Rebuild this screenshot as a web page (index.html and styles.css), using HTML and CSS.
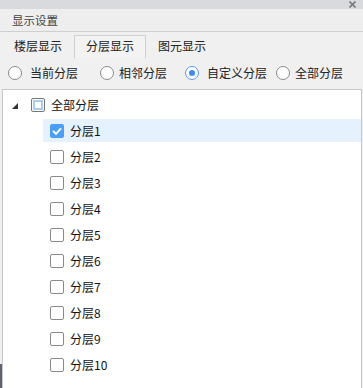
FILE: index.html
```html
<!DOCTYPE html>
<html>
<head>
<meta charset="utf-8">
<link rel="stylesheet" href="styles.css">
</head>
<body>
<div class="win">
  <div class="topbar"><svg class="close" width="7" height="7" viewBox="0 0 7 7"><path d="M0.5 0.5 L6.5 6.5 M6.5 0.5 L0.5 6.5" stroke="#7a7a7a" stroke-width="1.6"/></svg></div>
  <div class="title">显示设置</div>
  <div class="tabs">
    <div class="tab">楼层显示</div>
    <div class="tab active">分层显示</div>
    <div class="tab">图元显示</div>
  </div>
  <div class="radios">
    <label class="radio r1"><span class="dot"></span>当前分层</label>
    <label class="radio r2"><span class="dot"></span>相邻分层</label>
    <label class="radio r3 on"><span class="dot"></span>自定义分层</label>
    <label class="radio r4"><span class="dot"></span>全部分层</label>
  </div>
  <div class="tree">
    <div class="row root"><span class="arrow"></span><span class="cb part"></span><span class="lbl">全部分层</span></div>
    <div class="row child sel"><span class="cb checked"><svg width="10" height="8" viewBox="0 0 10 8"><path d="M1 4 L4 6.8 L9 1.3" fill="none" stroke="#fff" stroke-width="2"/></svg></span><span class="lbl">分层1</span></div>
    <div class="row child"><span class="cb"></span><span class="lbl">分层2</span></div>
    <div class="row child"><span class="cb"></span><span class="lbl">分层3</span></div>
    <div class="row child"><span class="cb"></span><span class="lbl">分层4</span></div>
    <div class="row child"><span class="cb"></span><span class="lbl">分层5</span></div>
    <div class="row child"><span class="cb"></span><span class="lbl">分层6</span></div>
    <div class="row child"><span class="cb"></span><span class="lbl">分层7</span></div>
    <div class="row child"><span class="cb"></span><span class="lbl">分层8</span></div>
    <div class="row child"><span class="cb"></span><span class="lbl">分层9</span></div>
    <div class="row child"><span class="cb"></span><span class="lbl">分层10</span></div>
  </div>
  <div class="edge"></div>
</div>
</body>
</html>
```
FILE: styles.css
```css
html, body {
  margin: 0;
  padding: 0;
  background: #f0f0f0;
}
body {
  font-family: "Microsoft YaHei", "Noto Sans CJK SC", sans-serif;
  font-size: 12px;
  color: #111;
}
.win {
  position: relative;
  width: 363px;
  height: 388px;
  overflow: hidden;
  display: flex;
  flex-direction: column;
}
.topbar {
  height: 9px;
  background: #d9dade;
  display: flex;
  justify-content: flex-end;
  align-items: center;
  padding-right: 7px;
}
.title {
  height: 22px;
  line-height: 23px;
  background: #eeeeee;
  border-bottom: 1px solid #cfcfcf;
  padding-left: 12px;
  font-size: 11.5px;
  color: #444;
}
.tabs {
  display: flex;
  height: 23px;
  margin-top: 3px;
  padding-left: 2px;
}
.tab {
  box-sizing: border-box;
  width: 72px;
  text-align: center;
  line-height: 20px;
  font-size: 12px;
  color: #222;
  border: 1px solid transparent;
  border-bottom: none;
}
.tab.active {
  border-color: #cfcfcf;
  background: #f3f3f3;
}
.radios {
  display: flex;
  height: 27px;
  align-items: center;
  padding-left: 8px;
  padding-top: 1px;
}
.radio {
  display: flex;
  align-items: center;
  font-size: 12px;
  color: #222;
}
.r1 { margin-right: 22px; }
.r2 { margin-right: 18px; }
.r3 { margin-right: 9px; }
.r2 .dot, .r4 .dot { margin-right: 5px; }
.dot {
  box-sizing: border-box;
  width: 14px;
  height: 14px;
  border: 1px solid #8a8a8a;
  border-radius: 50%;
  background: #fff;
  margin-right: 8px;
  position: relative;
}
.radio.on .dot {
  border-color: #5a9be6;
}
.radio.on .dot::after {
  content: "";
  position: absolute;
  left: 3px;
  top: 3px;
  width: 6px;
  height: 6px;
  border-radius: 50%;
  background: #3c8ff0;
}
.tree {
  flex: 1;
  margin-top: 3px;
  margin-left: 2px;
  margin-right: 1px;
  background: #fff;
  border-top: 1px solid #c8c8c8;
  border-left: 1px solid #c8c8c8;
  border-right: 1px solid #c8c8c8;
  padding-top: 3px;
}
.row {
  height: 23px;
  margin-bottom: 3px;
  display: flex;
  align-items: center;
}
.row.root {
  padding-left: 9px;
}
.row.child {
  margin-left: 40px;
  padding-left: 7px;
}
.row.sel {
  background: #e5f1fd;
}
.arrow {
  width: 0;
  height: 0;
  border-left: 6px solid transparent;
  border-bottom: 6px solid #333;
  margin-right: 13px;
  margin-top: 2px;
}
.cb {
  width: 14px;
  height: 14px;
  box-sizing: border-box;
  border: 1px solid #8a8a8a;
  border-radius: 2px;
  background: #fff;
  margin-right: 6px;
  display: flex;
  align-items: center;
  justify-content: center;
}
.cb.part {
  border-color: #777;
  box-shadow: inset 0 0 0 1px #fff, inset 0 0 0 3px #a9cdf2;
}
.cb.checked {
  background: #4a9ff5;
  border-color: #4a9ff5;
}
.lbl {
  font-size: 12px;
  color: #111;
}
.edge {
  position: absolute;
  left: 0;
  top: 364px;
  width: 2px;
  height: 24px;
  background: #5c6270;
}
```
